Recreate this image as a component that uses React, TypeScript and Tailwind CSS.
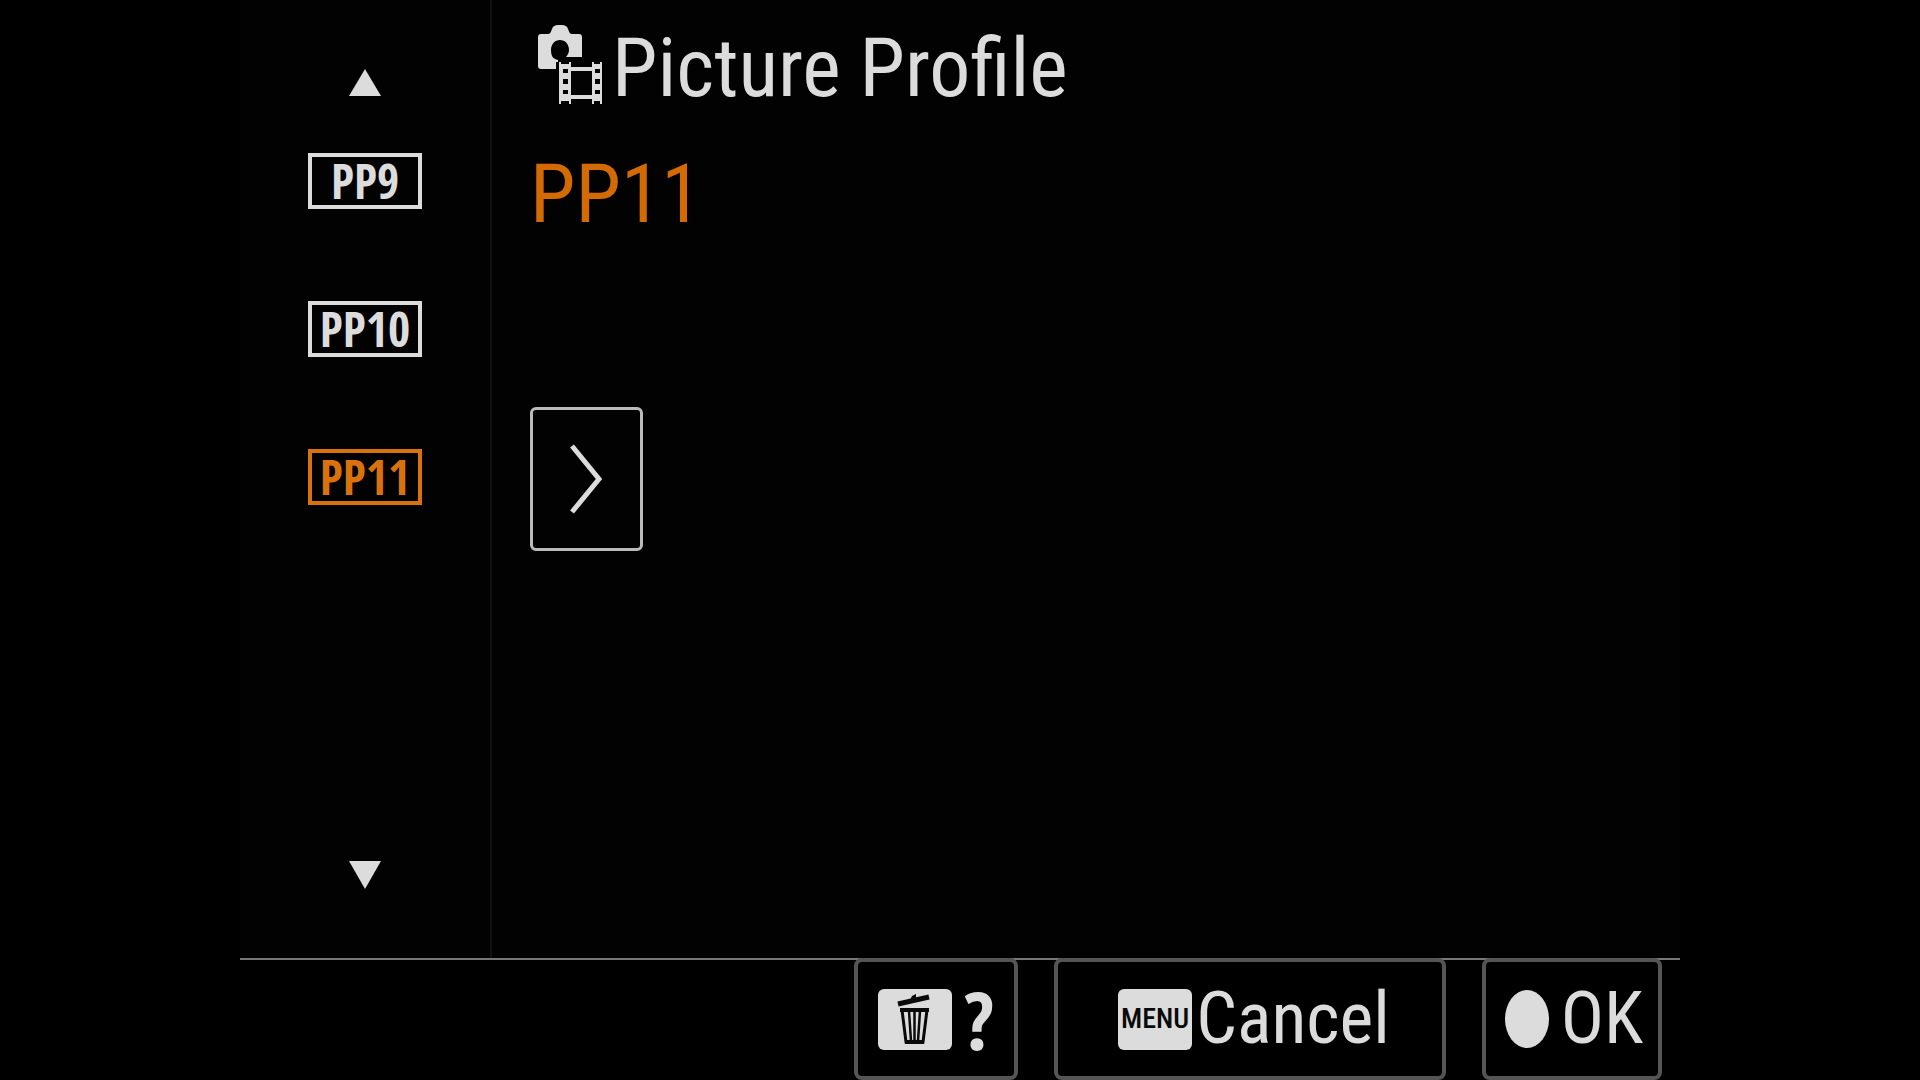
import React, { useState } from 'react';
import clsx from 'clsx';

const profiles = ['PP9', 'PP10', 'PP11'];

function StillMovieIcon() {
  return (
    <svg width="64" height="86" viewBox="0 0 64 86" fill="none" aria-hidden="true" className="shrink-0">
      {/* Camera body */}
      <path
        fill="#dcdcdc"
        fillRule="evenodd"
        d="M3 9H10C12 9 13 7 14 4C15 1 17 0 20 0H24C27 0 29 1 30 4C31 7 32 9 34 9H41C43 9 44 10 44 12V32H28C30 30 31 27 31 25C31 19 27 15 22 15C17 15 13 19 13 25C13 31 15 34 20 35V37H18V44H3C1 44 0 43 0 41V12C0 10 1 9 3 9Z"
      />
      {/* Film strip */}
      <path
        fill="#dcdcdc"
        fillRule="evenodd"
        d="M21 37H23V39H31V37H33V42H54V37H56V39H62V37H64V79H62V76H56V79H54V74H33V79H31V76H23V79H21ZM33 46V70H54V46ZM25 44V48H30V44ZM25 54V59H30V54ZM25 65V69H30V65ZM57 44V48H62V44ZM57 54V59H62V54ZM57 65V69H62V65Z"
      />
    </svg>
  );
}

function TrashIcon() {
  return (
    <svg width="34" height="52" viewBox="0 0 34 52" fill="none" aria-hidden="true" className="-ml-1">
      <path d="M2 11L33 4" stroke="#0a0a0a" strokeWidth="5" />
      <path d="M14 7L16 3L20 1L20 6Z" fill="#0a0a0a" />
      <path d="M6 17H31L27 49H10Z" stroke="#0a0a0a" strokeWidth="3" />
      <path d="M4 17H33" stroke="#0a0a0a" strokeWidth="4" />
      <path d="M9 49H28" stroke="#0a0a0a" strokeWidth="4" />
      <path d="M13 18L15 48M18.500 18V48M24 18L22 48" stroke="#0a0a0a" strokeWidth="2.500" />
    </svg>
  );
}

const footerButton =
  'flex items-center justify-center h-[122px] -mt-0.5 border-4 border-[#555555] rounded-lg text-[72px] leading-none';

const keyCap = 'w-[74px] h-[61px] rounded-md bg-[#dcdcdc] text-[#0a0a0a] flex items-center justify-center';

export default function App() {
  const [selected, setSelected] = useState('PP11');

  const move = (step: number) => {
    const next = profiles[profiles.indexOf(selected) + step];
    if (next) setSelected(next);
  };

  return (
    <div className="min-h-screen bg-black flex flex-col text-[#dcdcdc] font-['Roboto_Condensed',Roboto,sans-serif]">
      <div className="w-3/4 mx-auto flex-1 flex flex-col bg-[#020202]">
        <main className="flex-1 flex">
          {/* Profile list */}
          <nav aria-label="Picture profiles" className="w-[17.5%] border-r-2 border-[#111111] flex flex-col items-center pt-[69px] pb-[69px]">
            <button type="button" aria-label="Previous profile" onClick={() => move(-1)}>
              <svg width="32" height="28" viewBox="0 0 32 28" className="block">
                <path d="M16 0L32 27H0Z" fill="#dcdcdc" />
              </svg>
            </button>
            <div className="mt-14 flex flex-col gap-[92px]">
              {profiles.map((name) => (
                <button
                  key={name}
                  type="button"
                  aria-pressed={name === selected}
                  onClick={() => setSelected(name)}
                  className={clsx(
                    "w-[114px] h-14 border-4 flex items-center justify-center font-['Open_Sans_Condensed',sans-serif] text-[48px] leading-none font-bold",
                    name === selected ? 'border-[#d9720c] text-[#d9720c]' : 'border-[#dcdcdc]'
                  )}
                >
                  {name}
                </button>
              ))}
            </div>
            <button type="button" aria-label="Next profile" onClick={() => move(1)} className="mt-auto">
              <svg width="32" height="28" viewBox="0 0 32 28" className="block">
                <path d="M0 0H32L16 28Z" fill="#dcdcdc" />
              </svg>
            </button>
          </nav>

          {/* Selected profile */}
          <section className="flex-1 pt-[18px] pl-[38px]">
            <h1 className="flex items-center gap-2.5 pl-2 text-[82px] leading-[100px]">
              <StillMovieIcon />
              Picture Profile
            </h1>
            <p className="mt-[26px] text-[82px] leading-[100px] text-[#d46a04]">{selected}</p>
            <button
              type="button"
              aria-label="Adjust settings"
              className="mt-[163px] w-[113px] h-[144px] border-[3px] border-[#bbbbbb] rounded-md flex items-center justify-center"
            >
              <svg width="36" height="72" viewBox="0 0 36 72" fill="none">
                <path d="M3 3L30 36L3 69" stroke="#dcdcdc" strokeWidth="5" />
              </svg>
            </button>
          </section>
        </main>

        {/* Key guide */}
        <footer className="border-t-2 border-[#777777] bg-black flex justify-end gap-9 pr-[18px]">
          <button type="button" aria-label="Help" className={clsx(footerButton, 'w-[164px] gap-3')}>
            <span className={keyCap}>
              <TrashIcon />
            </span>
            <span className="font-['Open_Sans_Condensed',sans-serif] font-bold text-[80px] leading-none">?</span>
          </button>
          <button type="button" className={clsx(footerButton, 'w-[392px] pl-2 gap-1')}>
            <span className={clsx(keyCap, 'text-[28px] font-medium')}>MENU</span>
            Cancel
          </button>
          <button type="button" className={clsx(footerButton, 'w-[180px] pl-1 gap-3')}>
            <span className="w-11 h-[58px] rounded-[50%] bg-[#dcdcdc]" />
            OK
          </button>
        </footer>
      </div>
    </div>
  );
}
